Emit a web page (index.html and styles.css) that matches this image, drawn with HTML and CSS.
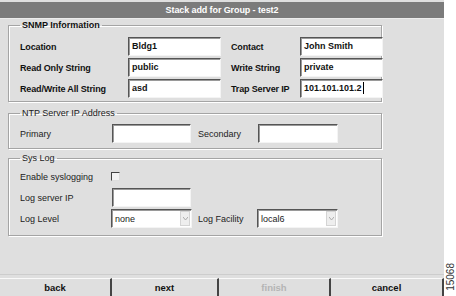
FILE: index.html
```html
<html>
	<head>
		<link rel="stylesheet" href="styles.css">
	</head>
	<body>
		<div id="screen">
			<div id="window">
				<div id="title">Stack add for Group - test2</div>

				<div id="content">
					<fieldset class="box snmp">
						<legend>SNMP Information</legend>
						<div class="grid snmp-grid">
							<span class="label">Location</span>
							<div class="field">Bldg1</div>
							<span class="label second">Contact</span>
							<div class="field">John Smith</div>

							<span class="label">Read Only String</span>
							<div class="field">public</div>
							<span class="label second">Write String</span>
							<div class="field">private</div>

							<span class="label">Read/Write All String</span>
							<div class="field">asd</div>
							<span class="label second">Trap Server IP</span>
							<div class="field">101.101.101.2<span class="caret"></span></div>
						</div>
					</fieldset>

					<fieldset class="box ntp">
						<legend>NTP Server IP Address</legend>
						<div class="grid plain-grid">
							<span class="label">Primary</span>
							<div class="field"></div>
							<span class="label second">Secondary</span>
							<div class="field"></div>
						</div>
					</fieldset>

					<fieldset class="box syslog">
						<legend>Sys Log</legend>
						<div class="grid plain-grid">
							<span class="label">Enable syslogging</span>
							<div><span class="check"></span></div>
							<span></span>
							<span></span>

							<span class="label">Log server IP</span>
							<div class="field"></div>
							<span></span>
							<span></span>

							<span class="label">Log Level</span>
							<div class="field select">
								<span class="value">none</span>
								<span class="arrow"><svg width="5" height="3" viewBox="0 0 5 3"><path d="M0 0 L2.5 3 L5 0" fill="none" stroke="#aaa" stroke-width="1"/></svg></span>
							</div>
							<span class="label second">Log Facility</span>
							<div class="field select">
								<span class="value">local6</span>
								<span class="arrow"><svg width="5" height="3" viewBox="0 0 5 3"><path d="M0 0 L2.5 3 L5 0" fill="none" stroke="#aaa" stroke-width="1"/></svg></span>
							</div>
						</div>
					</fieldset>
				</div>

				<div id="buttons">
					<div class="button">back</div>
					<div class="button">next</div>
					<div class="button disabled">finish</div>
					<div class="button">cancel</div>
				</div>
			</div>
			<div id="side">
				<span class="fig">15068</span>
			</div>
		</div>
	</body>
</html>
```

FILE: styles.css
```css
body {
	margin: 0;
	background: #fff;
	font-family: "Liberation Sans", Arial, sans-serif;
	color: #111;
}

#screen {
	display: flex;
	width: 456px;
	height: 296px;
	overflow: hidden;
}

#window {
	width: 444px;
	height: 296px;
	background: #dfdfdf;
	display: flex;
	flex-direction: column;
}

#title {
	margin-top: 2px;
	height: 16px;
	line-height: 16px;
	background: #7b7b7b;
	border-bottom: 1px solid #ececec;
	color: #fff;
	font-weight: bold;
	font-size: 9px;
	letter-spacing: -0.1px;
	text-align: center;
}

#content {
	flex: 1;
	padding-left: 8px;
}

.box {
	margin: 0;
	width: 374px;
	box-sizing: border-box;
	min-width: 0;
	padding: 6px 0 3px 11px;
	border: 1px solid #a4a4a4;
	box-shadow: inset 1px 1px 0 #fff, 1px 1px 0 #fff;
}

.box legend {
	padding: 0 2px;
	font-size: 9px;
	line-height: 12px;
	color: #222;
}

.snmp legend {
	font-weight: bold;
	color: #111;
}

.ntp {
	margin-top: 5px;
	padding-top: 5px;
	padding-bottom: 5px;
}

.syslog {
	margin-top: 3px;
	padding-top: 3px;
	padding-bottom: 7px;
}

.grid {
	display: grid;
	grid-auto-rows: 19px;
	row-gap: 2px;
	align-items: center;
}

.snmp-grid {
	grid-template-columns: 108px 93px 79px 83px;
}

.plain-grid {
	grid-template-columns: 92px 79px 67px 80px;
}

.label {
	font-size: 9px;
	color: #222;
	white-space: nowrap;
}

.snmp .label {
	font-weight: bold;
	color: #111;
	letter-spacing: -0.15px;
}

.label.second {
	padding-left: 10px;
}

.plain-grid .label.second {
	padding-left: 7px;
}

.field {
	height: 19px;
	box-sizing: border-box;
	background: #fff;
	border: 1px solid;
	border-color: #555 #f4f4f4 #f4f4f4 #555;
	box-shadow: inset 1px 1px 0 #9a9a9a;
	padding-left: 3px;
	font-size: 9px;
	line-height: 16px;
	white-space: nowrap;
	overflow: hidden;
}

.snmp .field {
	font-weight: bold;
	color: #111;
}

.caret {
	display: inline-block;
	width: 1px;
	height: 12px;
	background: #000;
	vertical-align: -3px;
	margin-left: 1px;
}

.check {
	display: block;
	width: 9px;
	height: 9px;
	box-sizing: border-box;
	margin-left: -1px;
	background: #f4f4f4;
	border: 1px solid;
	border-color: #444 #ddd #ddd #444;
}

.select {
	display: flex;
	align-items: center;
	width: 81px;
	margin-left: -1px;
	color: #222;
}

.select .value {
	flex: 1;
}

.select .arrow {
	width: 8px;
	height: 13px;
	margin-right: 1px;
	background: #eee;
	border: 1px solid #d4d4d4;
	display: flex;
	align-items: center;
	justify-content: center;
}

#buttons {
	display: grid;
	grid-template-columns: 112px 107px 112px 1fr;
	border-top: 1px solid #cdcdcd;
	padding-top: 3px;
}

.button {
	height: 18px;
	box-sizing: border-box;
	border-top: 1px solid #fafafa;
	border-right: 2px solid #444;
	text-align: center;
	font-weight: bold;
	font-size: 9.5px;
	line-height: 17px;
	color: #111;
}

.button.disabled {
	color: #b4b4b4;
}

#side {
	flex: 1;
	display: flex;
	align-items: flex-end;
	justify-content: center;
	padding-bottom: 5px;
}

.fig {
	writing-mode: vertical-rl;
	transform: rotate(180deg);
	font-size: 10px;
	color: #333;
}
```
